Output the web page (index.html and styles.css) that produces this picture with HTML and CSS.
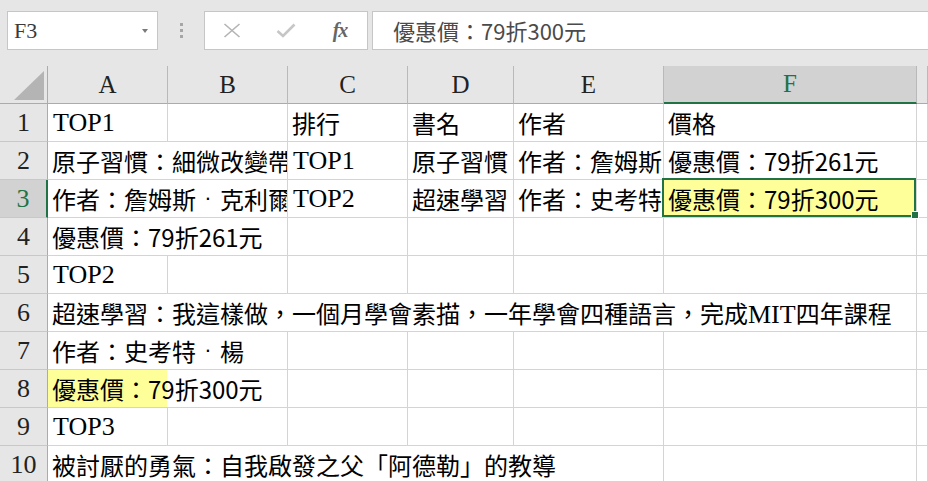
FILE: index.html
```html
<!DOCTYPE html>
<html lang="zh-Hant">
<head>
<meta charset="utf-8">
<title>活頁簿</title>
<link rel="stylesheet" href="styles.css">
</head>
<body>
<div class="fbar">
  <div class="namebox"><span>F3</span><span class="caret"></span></div>
  <div class="grip"><i></i><i></i><i></i></div>
  <div class="fbtns">
    <span class="btn"><svg width="18" height="15" viewBox="0 0 18 15"><path d="M1.5 1 L16.5 14 M16.5 1 L1.5 14" stroke="#b4b4b4" stroke-width="1.6" fill="none"/></svg></span>
    <span class="btn"><svg width="20" height="15" viewBox="0 0 20 15"><path d="M1.5 8 L7 13 L18.5 1.5" stroke="#c6c6c6" stroke-width="2.6" fill="none"/></svg></span>
    <span class="btn fx">fx</span>
  </div>
  <div class="finput">優惠價：79折300元</div>
</div>

<div class="sheet">
  <!-- column headers -->
  <div class="c h corner"><span class="tri"></span></div>
  <div class="c h">A</div>
  <div class="c h">B</div>
  <div class="c h">C</div>
  <div class="c h">D</div>
  <div class="c h">E</div>
  <div class="c h on">F</div>
  <div class="c h"></div>

  <!-- row 1 -->
  <div class="c r">1</div>
  <div class="c">TOP1</div>
  <div class="c"></div>
  <div class="c cjk">排行</div>
  <div class="c cjk">書名</div>
  <div class="c cjk">作者</div>
  <div class="c cjk">價格</div>
  <div class="c"></div>

  <!-- row 2 -->
  <div class="c r">2</div>
  <div class="c cjk s2">原子習慣：細微改變帶</div>
  <div class="c">TOP1</div>
  <div class="c cjk">原子習慣</div>
  <div class="c cjk">作者：詹姆斯</div>
  <div class="c cjk">優惠價：79折261元</div>
  <div class="c"></div>

  <!-- row 3 -->
  <div class="c r on">3</div>
  <div class="c cjk s2">作者：詹姆斯<span class="dot">·</span>克利爾</div>
  <div class="c">TOP2</div>
  <div class="c cjk">超速學習</div>
  <div class="c cjk">作者：史考特</div>
  <div class="c cjk active">優惠價：79折300元<span class="sel"></span></div>
  <div class="c"></div>

  <!-- row 4 -->
  <div class="c r">4</div>
  <div class="c cjk s2">優惠價：79折261元</div>
  <div class="c"></div>
  <div class="c"></div>
  <div class="c"></div>
  <div class="c"></div>
  <div class="c"></div>

  <!-- row 5 -->
  <div class="c r">5</div>
  <div class="c">TOP2</div>
  <div class="c"></div>
  <div class="c"></div>
  <div class="c"></div>
  <div class="c"></div>
  <div class="c"></div>
  <div class="c"></div>

  <!-- row 6 -->
  <div class="c r">6</div>
  <div class="c cjk s6">超速學習：我這樣做，一個月學會素描，一年學會四種語言，完成<span class="lat">MIT</span>四年課程</div>
  <div class="c"></div>

  <!-- row 7 -->
  <div class="c r">7</div>
  <div class="c cjk s2">作者：史考特<span class="dot">·</span>楊</div>
  <div class="c"></div>
  <div class="c"></div>
  <div class="c"></div>
  <div class="c"></div>
  <div class="c"></div>

  <!-- row 8 -->
  <div class="c r">8</div>
  <div class="c cjk s2 fillA">優惠價：79折300元</div>
  <div class="c"></div>
  <div class="c"></div>
  <div class="c"></div>
  <div class="c"></div>
  <div class="c"></div>

  <!-- row 9 -->
  <div class="c r">9</div>
  <div class="c">TOP3</div>
  <div class="c"></div>
  <div class="c"></div>
  <div class="c"></div>
  <div class="c"></div>
  <div class="c"></div>
  <div class="c"></div>

  <!-- row 10 -->
  <div class="c r">10</div>
  <div class="c cjk s5">被討厭的勇氣：自我啟發之父「阿德勒」的教導</div>
  <div class="c"></div>
  <div class="c"></div>
</div>
</body>
</html>
```

FILE: styles.css
```css
html, body {
  margin: 0;
  padding: 0;
  background: #fff;
  overflow: hidden;
}

body {
  width: 928px;
  height: 481px;
  font-family: "Liberation Serif", "Noto Sans CJK TC", serif;
}

/* ---------- formula bar ---------- */
.fbar {
  height: 66px;
  box-sizing: border-box;
  background: #e6e6e6;
  display: flex;
  align-items: flex-start;
  padding: 11px 0 0 7px;
}

.namebox {
  width: 151px;
  height: 39px;
  box-sizing: border-box;
  border: 1px solid #c6c6c6;
  background: #fff;
  display: flex;
  align-items: center;
  justify-content: space-between;
  padding: 0 9px 0 6px;
  font-size: 22px;
  color: #3a3a3a;
}

.caret {
  width: 0;
  height: 0;
  border-left: 3.5px solid transparent;
  border-right: 3.5px solid transparent;
  border-top: 4px solid #7a7a7a;
}

.grip {
  width: 46px;
  display: flex;
  flex-direction: column;
  align-items: center;
  gap: 3px;
  padding-top: 12px;
}

.grip i {
  display: block;
  width: 3px;
  height: 3px;
  background: #a6a6a6;
}

.fbtns {
  width: 164px;
  height: 39px;
  box-sizing: border-box;
  border: 1px solid #c6c6c6;
  background: #fff;
  display: flex;
  align-items: center;
}

.btn {
  width: 54px;
  display: flex;
  justify-content: center;
  align-items: center;
}

.btn.fx {
  font-family: "Liberation Serif", serif;
  font-style: italic;
  font-weight: bold;
  font-size: 20px;
  color: #666;
  letter-spacing: -1px;
}

.finput {
  flex: 1;
  margin-left: 4px;
  height: 39px;
  box-sizing: border-box;
  border: 1px solid #c6c6c6;
  border-right: 0;
  background: #fff;
  padding-left: 20px;
  font-family: "Noto Sans CJK TC", sans-serif;
  font-size: 22px;
  line-height: 37px;
  color: #4a4a4a;
  white-space: nowrap;
}

/* ---------- worksheet grid ---------- */
.sheet {
  display: grid;
  grid-template-columns: 48px 120px 120px 120px 106px 150px 253px 1fr;
  grid-auto-rows: 38px;
}

.c {
  box-sizing: border-box;
  border-right: 1px solid #d4d4d4;
  border-bottom: 1px solid #d4d4d4;
  white-space: nowrap;
  overflow: hidden;
  padding-left: 5px;
  font-size: 26px;
  line-height: 37px;
  color: #000;
  position: relative;
}

.cjk {
  font-family: "Noto Sans CJK TC", sans-serif;
  font-size: 24px;
  padding-left: 4px;
}

.lat {
  font-family: "Liberation Serif", serif;
  font-size: 26px;
}

/* name separator: a light middle dot on a full-width slot */
.dot {
  display: inline-block;
  width: 24px;
  line-height: 20px;
  text-align: center;
  font-family: "Liberation Sans", sans-serif;
  font-size: 22px;
  vertical-align: 4px;
}

.s2 { grid-column: span 2; }
.s5 { grid-column: span 5; }
.s6 { grid-column: span 6; }

/* headers */
.h {
  background: #e6e6e6;
  border-right-color: #b9b9b9;
  border-bottom-color: #ababab;
  text-align: center;
  padding: 0;
  font-size: 25px;
  color: #222;
}

.h.on {
  background: #d2d2d2;
  color: #217346;
  border-bottom: 2px solid #217346;
  line-height: 36px;
}

.corner {
  border-right-color: #ababab;
}

.tri {
  position: absolute;
  right: 3px;
  bottom: 3px;
  width: 30px;
  height: 29px;
  background: #b4b4b4;
  clip-path: polygon(100% 0, 100% 100%, 0 100%);
}

.r {
  background: #e6e6e6;
  border-right-color: #ababab;
  border-bottom-color: #c8c8c8;
  text-align: center;
  padding: 0;
  font-size: 26px;
  color: #222;
}

.r.on {
  background: #d2d2d2;
  color: #217346;
  border-right: 2px solid #217346;
}

/* cell fills */
.fillA {
  background: linear-gradient(90deg, #ffff99 119px, #fff 119px);
}

.active {
  background: #ffff99;
  overflow: visible;
}

.sel {
  position: absolute;
  left: -2px;
  top: -2px;
  right: 0;
  bottom: 0;
  border: 2px solid #217346;
  z-index: 2;
  pointer-events: none;
}

.sel::after {
  content: "";
  position: absolute;
  right: -5px;
  bottom: -4px;
  width: 6px;
  height: 6px;
  background: #217346;
  border: 1px solid #fff;
}
```
